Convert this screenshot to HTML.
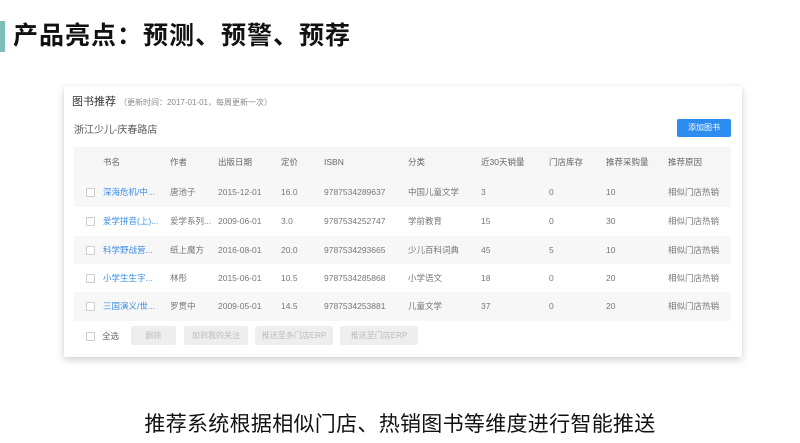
<!DOCTYPE html>
<html><head><meta charset="utf-8"><style>
*{margin:0;padding:0;box-sizing:border-box}
body{width:800px;height:443px;background:#fff;position:relative;overflow:hidden;font-family:"Liberation Sans","Noto Sans CJK SC",sans-serif}
.bar{position:absolute;left:0;top:21px;width:5px;height:31px;background:#7fbdb7}
.title{position:absolute;left:13px;top:21px;font-size:25px;font-weight:bold;color:#111;line-height:31px;letter-spacing:1px}
.card{position:absolute;left:64px;top:86px;width:678px;height:271px;background:#fff;box-shadow:0 3px 8px rgba(0,0,0,.18),0 0 2px rgba(0,0,0,.06)}
.t{position:absolute;font-size:9px;color:#666;white-space:nowrap}
.h1{left:8px;top:7px;font-size:11px;color:#333}
.h1 small{font-size:8px;color:#888}
.store{left:10px;top:35px;font-size:10px;color:#555}
.btn{position:absolute;left:613px;top:33px;width:54px;height:18px;background:#2d8cf0;border-radius:2px;color:#fff;font-size:8px;text-align:center;line-height:18px}
.row{position:absolute;left:10px;width:657px;height:29px}
.row span{position:absolute;top:0;line-height:29px;font-size:8.5px;color:#777;white-space:nowrap}
.row span.b{color:#3a8ee6}
.cb{position:absolute;left:12px;top:10px;width:9px;height:9px;border:1px solid #ccc;background:#fff;border-radius:1px}
.gb{position:absolute;top:240px;height:19px;background:#eee;border-radius:2px;color:#bbb;font-size:8px;text-align:center;line-height:19px}
.cap{position:absolute;left:0;width:800px;top:408px;text-align:center;font-size:21px;color:#111;letter-spacing:0.3px}
</style></head><body>
<div class="bar"></div>
<div class="title">产品亮点：预测、预警、预荐</div>
<div class="card">
<div class="t h1">图书推荐 <small>（更新时间：2017-01-01，每周更新一次）</small></div>
<div class="t store">浙江少儿-庆春路店</div>
<div class="btn">添加图书</div>
<div class="row" style="top:61px;height:31px;background:#f6f6f6"><span style="left:29px;line-height:31px;color:#666">书名</span><span style="left:96px;line-height:31px;color:#666">作者</span><span style="left:144px;line-height:31px;color:#666">出版日期</span><span style="left:207px;line-height:31px;color:#666">定价</span><span style="left:250px;line-height:31px;color:#666">ISBN</span><span style="left:334px;line-height:31px;color:#666">分类</span><span style="left:407px;line-height:31px;color:#666">近30天销量</span><span style="left:475px;line-height:31px;color:#666">门店库存</span><span style="left:532px;line-height:31px;color:#666">推荐采购量</span><span style="left:594px;line-height:31px;color:#666">推荐原因</span></div>
<div class="row" style="top:92px;background:#f7f7f7"><i class="cb"></i><span class="b" style="left:29px">深海危机/中...</span><span style="left:96px">唐池子</span><span style="left:144px">2015-12-01</span><span style="left:207px">16.0</span><span style="left:250px">9787534289637</span><span style="left:334px">中国儿童文学</span><span style="left:407px">3</span><span style="left:475px">0</span><span style="left:532px">10</span><span style="left:594px">相似门店热销</span></div>
<div class="row" style="top:121px;background:#fff"><i class="cb"></i><span class="b" style="left:29px">爱学拼音(上)...</span><span style="left:96px">爱学系列...</span><span style="left:144px">2009-06-01</span><span style="left:207px">3.0</span><span style="left:250px">9787534252747</span><span style="left:334px">学前教育</span><span style="left:407px">15</span><span style="left:475px">0</span><span style="left:532px">30</span><span style="left:594px">相似门店热销</span></div>
<div class="row" style="top:150px;background:#f7f7f7"><i class="cb"></i><span class="b" style="left:29px">科学野战营...</span><span style="left:96px">纸上魔方</span><span style="left:144px">2016-08-01</span><span style="left:207px">20.0</span><span style="left:250px">9787534293665</span><span style="left:334px">少儿百科词典</span><span style="left:407px">45</span><span style="left:475px">5</span><span style="left:532px">10</span><span style="left:594px">相似门店热销</span></div>
<div class="row" style="top:178px;background:#fff"><i class="cb"></i><span class="b" style="left:29px">小学生生字...</span><span style="left:96px">林彤</span><span style="left:144px">2015-06-01</span><span style="left:207px">10.5</span><span style="left:250px">9787534285868</span><span style="left:334px">小学语文</span><span style="left:407px">18</span><span style="left:475px">0</span><span style="left:532px">20</span><span style="left:594px">相似门店热销</span></div>
<div class="row" style="top:206px;background:#f7f7f7"><i class="cb"></i><span class="b" style="left:29px">三国演义/世...</span><span style="left:96px">罗贯中</span><span style="left:144px">2009-05-01</span><span style="left:207px">14.5</span><span style="left:250px">9787534253881</span><span style="left:334px">儿童文学</span><span style="left:407px">37</span><span style="left:475px">0</span><span style="left:532px">20</span><span style="left:594px">相似门店热销</span></div>
<div class="row" style="top:236px"><i class="cb" style="left:12px;top:10px"></i><span style="left:28px;color:#666">全选</span></div>
<div class="gb" style="left:67px;width:45px">删除</div>
<div class="gb" style="left:120px;width:64px">加到我的关注</div>
<div class="gb" style="left:191px;width:78px">推送至多门店ERP</div>
<div class="gb" style="left:276px;width:78px">推送至门店ERP</div>
</div>
<div class="cap">推荐系统根据相似门店、热销图书等维度进行智能推送</div>
</body></html>
